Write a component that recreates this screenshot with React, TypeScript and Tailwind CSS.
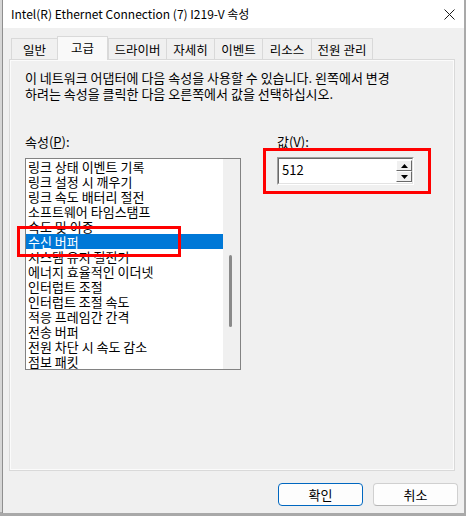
import React from "react";

const items = [
  "링크 상태 이벤트 기록",
  "링크 설정 시 깨우기",
  "링크 속도 배터리 절전",
  "소프트웨어 타임스탬프",
  "속도 및 이중",
  "수신 버퍼",
  "시스템 유지 절전기",
  "에너지 효율적인 이더넷",
  "인터럽트 조절",
  "인터럽트 조절 속도",
  "적응 프레임간 간격",
  "전송 버퍼",
  "전원 차단 시 속도 감소",
  "점보 패킷",
];

const tabs: { label: string; w: string; sel?: boolean }[] = [
  { label: "일반", w: "w-[46px]" },
  { label: "고급", w: "w-[51px]", sel: true },
  { label: "드라이버", w: "w-[58px]" },
  { label: "자세히", w: "w-[48px]" },
  { label: "이벤트", w: "w-[48px]" },
  { label: "리소스", w: "w-[49px]" },
  { label: "전원 관리", w: "w-[62px]" },
];

export default function App() {
  return (
    <div className="relative w-[466px] h-[516px] bg-[#a9a9a9] flex font-['Noto_Sans_CJK_KR','Noto_Sans',sans-serif] text-[12px] text-black overflow-hidden">
      <div className="w-[2px] h-[512px] bg-[#d6d6d6]" />
      <div className="w-[462px] h-[513px] flex flex-col bg-[#f0f0f0] border-l border-[#8f8f8f]">
        {/* title bar */}
        <div className="h-[28px] bg-white flex items-center justify-between pl-[8px] pr-[9px] shrink-0">
          <span className="leading-[16px]">Intel(R) Ethernet Connection (7) I219-V 속성</span>
          <svg width="11" height="11" viewBox="0 0 11 11">
            <path d="M0.5 0.5L10.5 10.5M10.5 0.5L0.5 10.5" stroke="#1a1a1a" strokeWidth="1" />
          </svg>
        </div>
        {/* tabs */}
        <div className="flex items-end h-[24px] mt-[8px] pl-[8px] shrink-0 text-[12.5px]">
          {tabs.map((t, i) =>
            t.sel ? (
              <div
                key={i}
                className={`${t.w} relative z-10 h-[24px] bg-[#f9f9f9] border-t border-l border-r border-[#d9d9d9] flex items-start justify-center pt-[3px] leading-[16px]`}
              >
                {t.label}
              </div>
            ) : (
              <div
                key={i}
                className={`${t.w} h-[22px] bg-[#f0f0f0] border-t border-l ${i === tabs.length - 1 ? "border-r" : ""} border-[#d9d9d9] flex items-start justify-center pt-[3px] leading-[16px]`}
              >
                {t.label}
              </div>
            )
          )}
        </div>
        {/* panel */}
        <div className="relative -mt-[1px] ml-[6px] w-[446px] h-[412px] border border-[#d9d9d9] bg-[#f0f0f0] shadow-[inset_1px_1px_0_#fbfbfb,inset_-1px_-1px_0_#fbfbfb] shrink-0 pl-[15px] pt-[10px] text-[13px]">
          <p className="leading-[16px] whitespace-nowrap">
            이 네트워크 어댑터에 다음 속성을 사용할 수 있습니다. 왼쪽에서 변경
            <br />
            하려는 속성을 클릭한 다음 오른쪽에서 값을 선택하십시오.
          </p>
          <div className="flex mt-[32px]">
            <div className="w-[216px]">
              <div className="leading-[16px] mb-[8px]">
                속성(<span className="underline">P</span>):
              </div>
              <div className="w-[216px] h-[212px] border border-[#828282] flex">
                <div className="w-[197px] bg-white">
                  {items.map((it, i) => (
                    <div
                      key={i}
                      className={`h-[15px] leading-[15px] pl-[2px] whitespace-nowrap ${
                        i === 5 ? "bg-[#0078d7] text-white" : ""
                      }`}
                    >
                      {it}
                    </div>
                  ))}
                </div>
                <div className="flex-1 bg-[#f0f0f0] pt-[96px] pl-[6px]">
                  <div className="w-[3px] h-[72px] rounded-full bg-[#8a8a8a]" />
                </div>
              </div>
            </div>
            <div className="ml-[36px]">
              <div className="leading-[16px] mb-[7px]">
                값(<span className="underline">V</span>):
              </div>
              <div className="w-[137px] h-[28px] border border-t-[#a0a0a0] border-l-[#a0a0a0] border-r-white border-b-white">
                <div className="w-full h-full border border-t-[#696969] border-l-[#696969] border-r-[#e3e3e3] border-b-[#e3e3e3] bg-white flex">
                  <div className="flex-1 pl-[3px] pt-[3px] leading-[16px]">512</div>
                  <div className="w-[16px] flex flex-col pt-[1px]">
                    <div className="h-[11px] bg-[#f0f0f0] border border-t-white border-l-white border-r-[#696969] border-b-[#696969] flex items-center justify-center">
                      <svg width="7" height="4" viewBox="0 0 7 4">
                        <path d="M3.5 0L7 4H0Z" fill="#000" />
                      </svg>
                    </div>
                    <div className="h-[11px] bg-[#f0f0f0] border border-t-white border-l-white border-r-[#696969] border-b-[#696969] flex items-center justify-center">
                      <svg width="7" height="4" viewBox="0 0 7 4">
                        <path d="M0 0H7L3.5 4Z" fill="#000" />
                      </svg>
                    </div>
                  </div>
                </div>
              </div>
            </div>
          </div>
        </div>
        {/* buttons */}
        <div className="flex justify-end gap-[10px] mt-[12px] pr-[6px] text-[13px]">
          <button className="w-[85px] h-[23px] rounded-[4px] bg-[#fdfdfd] border border-[#0067c0] leading-[16px]">
            확인
          </button>
          <button className="w-[85px] h-[23px] rounded-[4px] bg-[#fdfdfd] border border-[#d0d0d0] border-b-[#b5b5b5] leading-[16px]">
            취소
          </button>
        </div>
      </div>
      {/* annotation rectangles */}
      <div className="absolute left-[17px] top-[226px] w-[164px] h-[31px] border-[3px] border-[#ff0000]" />
      <div className="absolute left-[263px] top-[148px] w-[168px] h-[46px] border-[3px] border-[#ff0000]" />
    </div>
  );
}
